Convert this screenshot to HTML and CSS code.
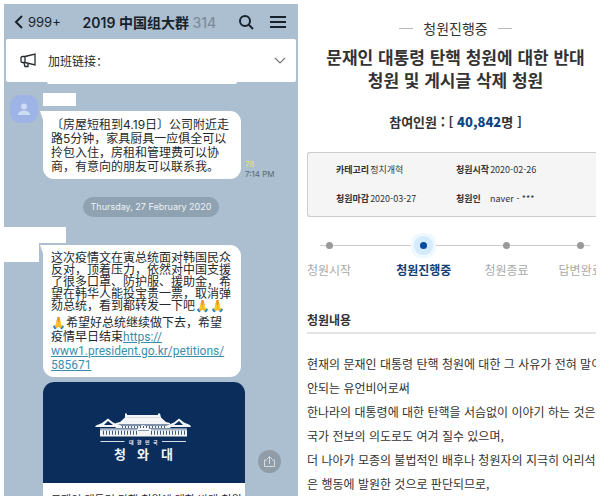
FILE: index.html
```html
<!DOCTYPE html>
<html lang="ko">
<head>
<meta charset="utf-8">
<meta name="viewport" content="width=device-width, initial-scale=1">
<title>청원진행중</title>
<link rel="stylesheet" href="styles.css">
</head>
<body>
<main class="page">
  <section class="chat" lang="zh-CN">
    <header class="chat-header">
      <button class="back" type="button">
        <svg width="10" height="16" viewBox="0 0 10 16"><path d="M8 2 2 8l6 6" fill="none" stroke="currentColor" stroke-width="2"/></svg>
        <span>999+</span>
      </button>
      <h1 class="chat-title">2019 中国组大群 <span class="count">314</span></h1>
      <button class="icon-button" type="button" aria-label="Search">
        <svg width="16" height="16" viewBox="0 0 16 16"><g fill="none" stroke="currentColor" stroke-width="2"><circle cx="7" cy="7" r="5"/><path d="m10.500 10.500 4.500 4.500"/></g></svg>
      </button>
      <button class="icon-button" type="button" aria-label="Menu">
        <svg width="16" height="16" viewBox="0 0 16 16"><path d="M0 3h16M0 8h16M0 13h16" stroke="currentColor" stroke-width="2"/></svg>
      </button>
    </header>
    <div class="notice">
      <svg class="horn" width="16" height="15" viewBox="0 0 16 15"><path d="M5 3.500 15 1v11L5 9.500H2.500Q1 9.500 1 8V5q0-1.500 1.500-1.500zM5 3.500v6M4 10l1 3.500h3V10.500" fill="none" stroke="currentColor" stroke-width="1.300"/></svg>
      <span class="notice-text">加班链接：</span>
      <button class="icon-button chevron" type="button" aria-label="Expand">
        <svg width="12" height="8" viewBox="0 0 12 8"><path d="m1 1 5 5 5-5" fill="none" stroke="currentColor" stroke-width="1.200"/></svg>
      </button>
    </div>
    <div class="thread">
      <div class="previous"></div>
      <article class="message">
        <div class="avatar">
          <svg width="12" height="13" viewBox="0 0 12 13"><g fill="currentColor"><circle cx="6" cy="3.500" r="3"/><path d="M0 12c0-3 2.500-4.500 6-4.500s6 1.500 6 4.500z"/></g></svg>
        </div>
        <div class="message-body">
          <div class="name-mask"></div>
          <div class="bubble-row">
            <div class="bubble roomy">〔房屋短租到4.19日〕公司附近走<br>路5分钟，家具厨具一应俱全可以<br>拎包入住，房租和管理费可以协<br>商，有意向的朋友可以联系我。</div>
            <div class="meta"><span class="reads">78</span><time>7:14 PM</time></div>
          </div>
        </div>
      </article>
      <div class="date"><time datetime="2020-02-27">Thursday, 27 February 2020</time></div>
      <div class="sender-mask"><div class="mask-large"></div><div class="mask-small"></div></div>
      <article class="message second">
        <div class="message-body">
          <div class="bubble">
            <div class="tight">这次疫情文在寅总统面对韩国民众<br>反对，顶着压力，依然对中国支援<br>了很多口罩、防护服、援助金，希<br>望在韩华人能投宝贵一票，取消弹<br>劾总统，看到都转发一下吧🙏🙏</div>
            <div class="loose">🙏希望好总统继续做下去，希望<br>疫情早日结束<a href="#petition">https://<br>www1.president.go.kr/petitions/<br>585671</a></div>
          </div>
          <div class="card-row">
            <div class="card" lang="ko">
              <div class="card-image">
                <svg class="emblem" width="100" height="52" viewBox="0 0 100 52" role="img" aria-label="대한민국 청와대">
                  <g fill="#f3f5f6">
                    <path d="M31 3.500h2v1.500h31V3.500h2l1 4 5 4.500 4 1v1.500H22V13l4-1 5-4.500z"/>
                    <path d="M24 15.500h50l3 2.500H21z"/>
                    <path d="m14 8.500 5 4 7 2.500 2 2H1l1-1.500 6-2.500zM14 11l-4 4h9z" fill-rule="evenodd"/>
                    <path d="m85 8.500 5 4 6 2.500 1 2H71l2-1.500 7-3zM85 11l-5 4h9z" fill-rule="evenodd"/>
                    <path d="M6 18.500h87v8H6z"/>
                    <path d="m44 17 5-2 6 2v2H44z"/>
                  </g>
                  <path d="M32 7.500h34" stroke="#b9c4d1" stroke-width=".5"/>
                  <path d="M28 17h44" stroke="#0b2d5b" stroke-width="1.500" stroke-dasharray="1 2"/>
                  <path d="M9 22.800h34M57 22.800h35" stroke="#3d5a80" stroke-width="4" stroke-dasharray="1 2"/>
                  <path d="M6 19.800h37M57 19.800h36M44 20.500h11" stroke="#3d5a80" stroke-width=".6"/>
                  <path d="M6.500 31.500h24M68 31.500h24" stroke="#d9e0e8"/>
                  <text class="emblem-small" x="35 43 51 59" y="34">대한민국</text>
                  <text class="emblem-large" x="20 43 67" y="49">청와대</text>
                </svg>
              </div>
              <p class="card-title">문재인 대통령 탄핵 청원에 대한 반대 청원</p>
            </div>
            <button class="share" type="button" aria-label="Share">
              <svg width="13" height="13" viewBox="0 0 13 13"><path d="M4 5H1.500v6.500h10V5H9M6.500 9V1.500M4 4l2.500-2.500L9 4" fill="none" stroke="currentColor"/></svg>
            </button>
          </div>
        </div>
      </article>
    </div>
  </section>

  <section class="petition" id="petition">
    <div class="summary">
      <p class="status">청원진행중</p>
      <h2 class="title">문재인 대통령 탄핵 청원에 대한 반대<br>청원 및 게시글 삭제 청원</h2>
      <p class="people">참여인원 : [ <strong>40,842</strong>명 ]</p>
    </div>
    <dl class="info">
      <div class="pair"><dt>카테고리</dt><dd>정치개혁</dd></div>
      <div class="pair"><dt>청원시작</dt><dd>2020-02-26</dd></div>
      <div class="pair"><dt>청원마감</dt><dd>2020-03-27</dd></div>
      <div class="pair"><dt>청원인</dt><dd>naver - ***</dd></div>
    </dl>
    <ol class="steps">
      <li>청원시작</li>
      <li class="current" aria-current="step">청원진행중</li>
      <li>청원종료</li>
      <li>답변완료</li>
    </ol>
    <h3 class="content-title">청원내용</h3>
    <p class="content">현재의 문재인 대통령 탄핵 청원에 대한 그 사유가 전혀 말이<br>안되는 유언비어로써<br>한나라의 대통령에 대한 탄핵을 서슴없이 이야기 하는 것은,<br>국가 전보의 의도로도 여겨 질수 있으며,<br>더 나아가 모종의 불법적인 배후나 청원자의 지극히 어리석<br>은 행동에 발원한 것으로 판단되므로,</p>
  </section>
</main>
</body>
</html>
```
FILE: styles.css
```css
* { box-sizing: border-box; }

body {
  margin: 0;
  background: #fff;
}

h1, h2, h3, p, dl, dd, ol {
  margin: 0;
  padding: 0;
}

button {
  padding: 0;
  border: 0;
  background: none;
  color: inherit;
  font: inherit;
}

svg { display: block; }

.page {
  display: grid;
  grid-template-columns: minmax(0, 294fr) minmax(0, 298fr);
  height: 100vh;
  padding: 4px;
}

/* Chat */
.chat {
  overflow: hidden;
  background: #abbfd0;
  color: #252a2e;
  font-family: Inter, "Noto Sans CJK SC", sans-serif;
  font-size: 12px;
}

.chat-header {
  display: flex;
  align-items: center;
  height: 35px;
  padding: 0 12px 0 10px;
  color: #17222d;
}

.back {
  display: flex;
  align-items: center;
  gap: 4px;
  font-size: 13px;
}

.chat-title {
  flex: 1;
  padding-left: 16px;
  text-align: center;
  white-space: nowrap;
  font-size: 14px;
  font-weight: 600;
}

.count {
  color: #7d8d9a;
  font-weight: 500;
}

.chat-header .icon-button { margin-left: 16px; }

.notice {
  display: flex;
  align-items: center;
  gap: 12px;
  height: 43px;
  margin: 0 2px;
  padding: 0 10px 0 14px;
  border-radius: 2px;
  background: #fff;
}

.notice-text { flex: 1; }

.chevron { color: #777; }

.previous {
  width: 190px;
  height: 2px;
  margin-left: 43px;
  border-radius: 0 0 10px 10px;
  background: #fff;
}

.message {
  display: flex;
  gap: 5px;
  padding: 9px 6px 0;
}

.avatar {
  display: grid;
  place-items: center;
  width: 28px;
  height: 28px;
  margin-top: 2px;
  border-radius: 10px;
  background: #9eb3e6;
  color: #cddcf5;
}

.name-mask {
  width: 33px;
  height: 13px;
  margin-bottom: 5px;
  background: #fff;
}

.bubble-row, .card-row {
  display: flex;
  align-items: flex-end;
  gap: 4px;
}

.bubble {
  position: relative;
  width: 198px;
  padding: 7px 8px 5px;
  border-radius: 11px;
  background: #fff;
  white-space: nowrap;
}

.bubble::before {
  content: "";
  position: absolute;
  top: 0;
  left: -3px;
  width: 14px;
  height: 10px;
  background: #fff;
  clip-path: polygon(0 0, 100% 0, 25% 100%);
}

.roomy { line-height: 14px; }
.tight { line-height: 12px; }

.loose {
  padding-top: 4px;
  line-height: 14px;
}

.bubble a {
  color: #3b8fae;
  font-family: Roboto, sans-serif;
}

.meta {
  color: #596773;
  font-size: 8px;
  line-height: 10px;
  white-space: nowrap;
}

.reads {
  display: block;
  color: #eae26c;
}

.date {
  display: flex;
  justify-content: center;
  margin-top: 18px;
}

.date time {
  padding: 0 8px;
  border-radius: 10px;
  background: #8fa2b1;
  color: #eef3f7;
  font-size: 9px;
  line-height: 20px;
}

.sender-mask {
  display: flex;
  height: 18px;
  margin-top: 10px;
}

.mask-large {
  width: 35px;
  height: 35px;
  background: #fff;
}

.mask-small {
  width: 27px;
  height: 16px;
  background: #fff;
}

.second { padding: 0 6px 0 39px; }

.card-row {
  gap: 13px;
  margin-top: 5px;
}

.card {
  width: 202px;
  overflow: hidden;
  border-radius: 11px;
  background: #fff;
}

.card-image {
  display: flex;
  justify-content: center;
  height: 101px;
  padding-top: 28px;
  background: #0b2d5b;
}

.emblem text {
  fill: #f3f5f6;
  font-family: "Noto Sans CJK KR", sans-serif;
  font-weight: 700;
}

.emblem .emblem-small { font-size: 5px; }
.emblem .emblem-large { font-size: 13px; }

.card-title {
  padding: 8px 8px 16px;
  font-family: "Noto Sans CJK KR", sans-serif;
  font-size: 11px;
  line-height: 16px;
  white-space: nowrap;
}

.share {
  display: grid;
  place-items: center;
  width: 23px;
  height: 23px;
  margin-bottom: 50px;
  border-radius: 50%;
  background: #909da8;
  color: #d5dce2;
}

/* Petition */
.petition {
  overflow: hidden;
  padding: 14px 0 0 9px;
  color: #333;
  font-family: "Noto Sans CJK KR", sans-serif;
  font-size: 12px;
  white-space: nowrap;
}

.summary {
  padding-left: 8px;
  text-align: center;
}

.status {
  display: flex;
  align-items: center;
  justify-content: center;
  gap: 10px;
  font-size: 14px;
  line-height: 20px;
}

.status::before, .status::after {
  content: "";
  width: 14px;
  height: 1px;
  background: #bbb;
}

.title {
  margin-top: 7px;
  font-size: 17px;
  font-weight: 700;
  line-height: 23px;
}

.people {
  margin-top: 21px;
  font-size: 13px;
  font-weight: 700;
  line-height: 20px;
}

.people strong { color: #0d4385; }

.info {
  display: grid;
  grid-template-columns: 120px 1fr;
  row-gap: 13px;
  margin-top: 20px;
  padding: 9px 0 9px 28px;
  border: 1px solid #ccc;
  border-right: 0;
  border-radius: 3px 0 0 3px;
  background: #f5f5f5;
  font-size: 9px;
  line-height: 16px;
}

.pair {
  display: flex;
  gap: 1px;
}

.pair dt {
  min-width: 33px;
  font-weight: 700;
}

.steps {
  position: relative;
  display: flex;
  margin-top: 18px;
  color: #aaa;
  line-height: 20px;
  list-style: none;
}

.steps::before {
  content: "";
  position: absolute;
  top: 10px;
  left: 13px;
  right: 6px;
  height: 1px;
  background: #ccc;
}

.steps li {
  position: relative;
  display: grid;
  justify-items: center;
  row-gap: 11px;
  padding-top: 7px;
}

.steps li::before {
  content: "";
  width: 7px;
  height: 7px;
  border-radius: 50%;
  background: #999;
}

.steps .current {
  margin: 0 33px 0 45px;
  color: #123e73;
  font-weight: 700;
}

.steps .current::before {
  background: #064a9b;
  box-shadow: 0 0 0 6px #d3ebfc, 0 0 0 9px #eef8fe;
}

.steps li:last-child { margin-left: 30px; }

.content-title {
  margin-top: 30px;
  padding-bottom: 2px;
  border-bottom: 2px solid #e3e3e3;
  font-size: 12px;
  line-height: 20px;
}

.content {
  margin-top: 18px;
  line-height: 24px;
}
```
